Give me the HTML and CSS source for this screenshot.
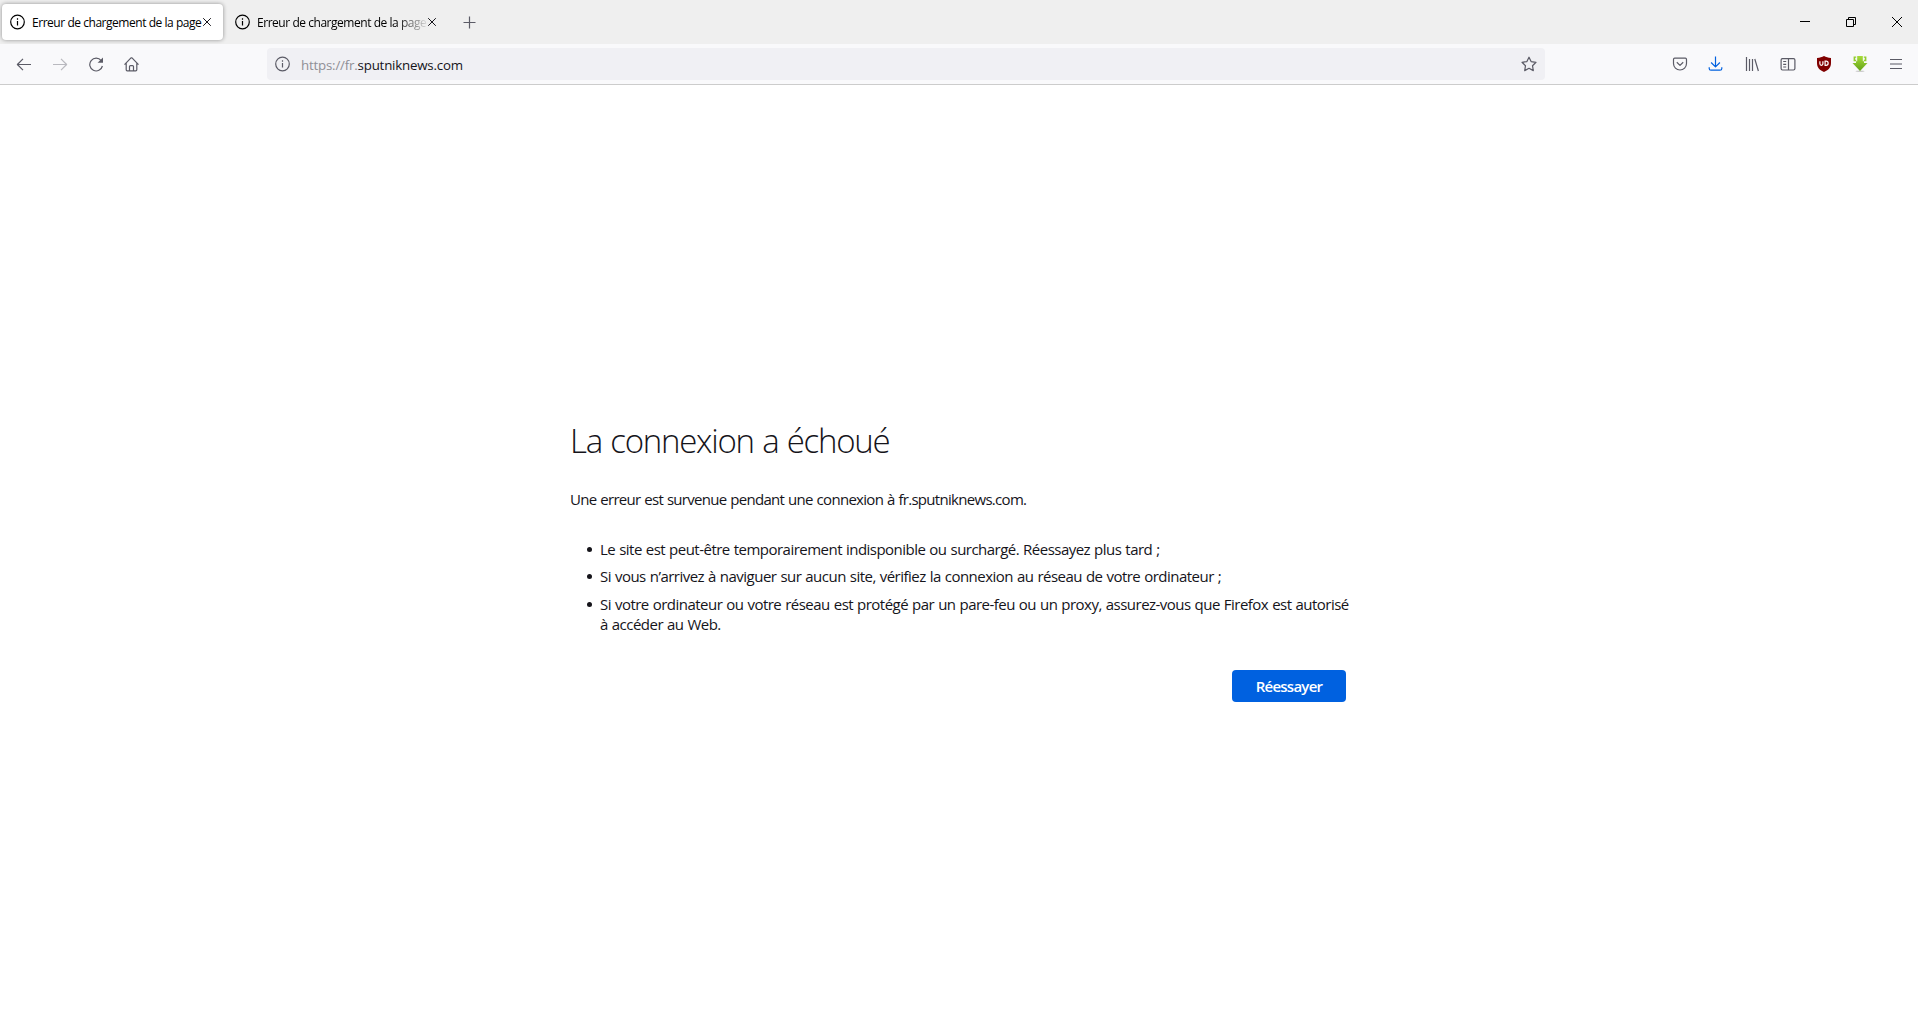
FILE: index.html
```html
<!DOCTYPE html>
<html lang="fr">
<head>
    <meta charset="UTF-8">
    <meta name="viewport" content="width=device-width, initial-scale=1.0">
    <title>Erreur de chargement de la page</title>
    <link rel="stylesheet" href="styles.css">
</head>
<body>
    <div class="tabbar">
        <div class="tab active">
            <svg class="icon" viewBox="0 0 16 16"><circle cx="7.5" cy="8" r="6.8"/><path d="M7.5 7v4.6M7.5 4.3v1.4"/></svg>
            <span class="tab-label">Erreur de chargement de la page</span>
            <svg class="tab-close" viewBox="0 0 10 10"><path d="M1.2 1.2l7.6 7.6M8.8 1.2L1.2 8.8"/></svg>
        </div>
        <div class="tab">
            <svg class="icon" viewBox="0 0 16 16"><circle cx="7.5" cy="8" r="6.8"/><path d="M7.5 7v4.6M7.5 4.3v1.4"/></svg>
            <span class="tab-label fade">Erreur de chargement de la page</span>
            <svg class="tab-close" viewBox="0 0 10 10"><path d="M1.2 1.2l7.6 7.6M8.8 1.2L1.2 8.8"/></svg>
        </div>
        <div class="new-tab">
            <svg class="icon" viewBox="0 0 16 16"><path d="M8.5 2.5v12M2.5 8.5h12"/></svg>
        </div>
        <div class="window-buttons">
            <div class="win-btn"><svg class="win-icon" viewBox="0 0 10 10"><path d="M0 4.5h10"/></svg></div>
            <div class="win-btn"><svg class="win-icon" viewBox="0 0 10 10"><path d="M.5 2.5h7v7h-7zM2.5 2.5v-2h7v7h-2"/></svg></div>
            <div class="win-btn"><svg class="win-icon" viewBox="0 0 10 10"><path d="M0 0l10 10M10 0L0 10"/></svg></div>
        </div>
    </div>

    <div class="toolbar">
        <div class="nav-btn"><svg class="icon" viewBox="0 0 16 16"><path d="M15 8.5H1.6M7 2.8L1.4 8.5 7 14.2"/></svg></div>
        <div class="nav-btn disabled"><svg class="icon" viewBox="0 0 16 16"><path d="M1 8.5h13.4M9 2.8l5.6 5.7L9 14.2"/></svg></div>
        <div class="nav-btn"><svg class="icon" viewBox="0 0 16 16"><path d="M13.2 4.6A6.4 6.4 0 1 0 14.4 10"/><path class="solid" d="M15 1.6v5.2H9.6z"/></svg></div>
        <div class="nav-btn"><svg class="icon" viewBox="0 0 16 16"><path d="M.5 8.6L7 1.8h1l6.5 6.8M2.2 7v6.8q0 1 1 1h8.6q1 0 1-1V7M5.5 14.6v-4q0-1 1-1h2q1 0 1 1v4"/></svg></div>

        <div class="urlbar">
            <svg class="icon" viewBox="0 0 16 16"><circle cx="7.5" cy="8" r="6.8"/><path d="M7.5 7v4.6M7.5 4.3v1.4"/></svg>
            <span class="url">https://fr.<span class="domain">sputniknews.com</span></span>
            <svg class="icon" viewBox="0 0 16 16"><path d="M8 1.2l2.1 4.4 4.9.7-3.5 3.4.8 4.9L8 12.3l-4.3 2.3.8-4.9L1 6.3l4.9-.7z"/></svg>
        </div>

        <div class="nav-btn"><svg class="icon" viewBox="0 0 16 16"><path d="M2.7 2.2h10.6q1.2 0 1.2 1.2v4.1a6.5 6.5 0 0 1-13 0V3.4q0-1.2 1.2-1.2zM4.8 6.3L8 9.4l3.2-3.1"/></svg></div>
        <div class="nav-btn download"><svg class="icon" viewBox="0 0 16 16"><path d="M7.5 .6v10.2M3.1 6.5l4.4 4.4 4.4-4.4M1.2 11.2v1.2q0 1.8 1.8 1.8h9q1.8 0 1.8-1.8v-1.2"/></svg></div>
        <div class="nav-btn"><svg class="icon" viewBox="0 0 16 16"><path d="M2.5 1v14M5.5 3v12M8.5 3v12M10.8 3l3.6 12"/></svg></div>
        <div class="nav-btn"><svg class="icon" viewBox="0 0 16 16"><path d="M2 2.6h11.5q1.4 0 1.4 1.4v8.6q0 1.4-1.4 1.4H2.5q-1.4 0-1.4-1.4V4q0-1.4 1.4-1.4zM8.5 2.6V14M3.2 5.5h3M3.2 8.3h3M3.2 11h3"/></svg></div>
        <div class="nav-btn">
            <svg class="badge" viewBox="0 0 16 16">
                <path fill="#800000" d="M8 0c2 1.2 4 1.8 7 2v5c0 5-3 7.3-7 9-4-1.7-7-4-7-9V2c3-.2 5-.8 7-2z"/>
                <path fill="none" stroke="#fff" stroke-width="1.2" d="M3.9 5.2v2.6q0 1.5 1.5 1.5t1.5-1.5V5.2M9.1 5.2v4.1h1a2 2 0 0 0 0-4.1z"/>
            </svg>
        </div>
        <div class="nav-btn">
            <svg class="badge" viewBox="0 0 16 16">
                <defs><linearGradient id="green" x2="0" y2="1"><stop offset="0" stop-color="#a8dc3a"/><stop offset="1" stop-color="#62a316"/></linearGradient></defs>
                <ellipse cx="8" cy="15.2" rx="4.5" ry=".8" fill="#ccc"/>
                <path fill="url(#green)" d="M5.2 0h5.6v5.2H12V7h3.5L8 15 .5 7H4V5.2h1.2z"/>
                <path fill="#93cc30" d="M1.6.5h2.6v1.2h-1v2h1v1.5H1.6zM14.4.5h-2.6v1.2h1v2h-1v1.5h2.6z"/>
            </svg>
        </div>
        <div class="nav-btn"><svg class="icon" viewBox="0 0 16 16"><path d="M2 3.5h12M2 8h12M2 12.5h12"/></svg></div>
    </div>

    <div class="content">
        <div class="error-box">
            <h1>La connexion a échoué</h1>
            <p>Une erreur est survenue pendant une connexion à fr.sputniknews.com.</p>
            <ul>
                <li>Le site est peut-être temporairement indisponible ou surchargé. Réessayez plus tard ;</li>
                <li>Si vous n’arrivez à naviguer sur aucun site, vérifiez la connexion au réseau de votre ordinateur ;</li>
                <li>Si votre ordinateur ou votre réseau est protégé par un pare-feu ou un proxy, assurez-vous que Firefox est autorisé<br>à accéder au Web.</li>
            </ul>
            <div class="actions">
                <button class="retry">Réessayer</button>
            </div>
        </div>
    </div>
</body>
</html>
```
FILE: styles.css
```css
* {
    box-sizing: border-box;
}
body {
    margin: 0;
    height: 100vh;
    display: flex;
    flex-direction: column;
    overflow: hidden;
    background-color: #fff;
    color: #15141a;
    font-family: "Open Sans", "Noto Sans", sans-serif;
    font-size: 15px;
}
svg {
    display: block;
    flex: none;
    fill: none;
    stroke: currentColor;
}
.icon {
    width: 16px;
    height: 16px;
    stroke-width: 1.2;
    stroke-linejoin: round;
}
.solid {
    fill: currentColor;
    stroke: none;
}
.badge {
    width: 16px;
    height: 16px;
    stroke: none;
}

/* tabs */
.tabbar {
    display: flex;
    height: 44px;
    padding-left: 2px;
    background-color: #efefef;
}
.tab {
    display: flex;
    align-items: center;
    width: 221px;
    height: 36px;
    margin: 4px 4px 0 0;
    padding-left: 8px;
    border-radius: 4px;
    color: #000;
}
.tab.active {
    background-color: #fff;
    box-shadow: 0 0 4px rgba(0, 0, 0, 0.4);
}
.tab-label {
    width: 170px;
    margin-left: 6px;
    white-space: nowrap;
    font-size: 12px;
    letter-spacing: -0.46px;
}
.tab-label.fade {
    -webkit-mask-image: linear-gradient(to right, #000 140px, transparent 172px);
    mask-image: linear-gradient(to right, #000 140px, transparent 172px);
}
.tab-close {
    width: 10px;
    height: 10px;
    color: #15141a;
}
.new-tab {
    display: flex;
    align-items: center;
    margin-left: 9px;
    color: #5b5b66;
}
.window-buttons {
    display: flex;
    margin: 0 -2px 0 auto;
}
.win-btn {
    display: flex;
    align-items: center;
    justify-content: center;
    width: 46px;
    color: #000;
}
.win-icon {
    width: 10px;
    height: 10px;
    overflow: visible;
}

/* navigation */
.toolbar {
    display: flex;
    align-items: center;
    height: 41px;
    padding: 0 4px 0 6px;
    background-color: #f9f9fb;
    border-bottom: 1px solid #ccc;
}
.nav-btn {
    display: flex;
    justify-content: center;
    width: 36px;
    color: #5b5b66;
}
.nav-btn.disabled {
    opacity: 0.4;
}
.nav-btn.download {
    color: #0061e0;
}
.urlbar {
    display: flex;
    flex: 1;
    align-items: center;
    height: 32px;
    margin: 0 117px;
    padding: 0 8px;
    border-radius: 4px;
    background-color: #f0f0f4;
    color: #5b5b66;
}
.url {
    flex: 1;
    margin-left: 10px;
    padding-top: 2px;
    font-size: 13.3px;
    letter-spacing: -0.2px;
    color: #8f8f96;
}
.domain {
    color: #15141a;
}

/* error page */
.content {
    flex: 1;
    display: flex;
    justify-content: center;
    padding: 334px 2px 0 0;
}
.error-box {
    width: 776px;
}
h1 {
    margin: 0 0 26px;
    font-size: 33px;
    font-weight: 300;
    line-height: 44px;
    letter-spacing: -1.25px;
    word-spacing: 1px;
}
p {
    margin: 0 0 30px;
    line-height: 20px;
    letter-spacing: -0.7px;
    word-spacing: 0.6px;
}
ul {
    margin: 0;
    padding-left: 30px;
    list-style: none;
}
li {
    position: relative;
    margin-bottom: 7.4px;
    line-height: 20px;
    letter-spacing: -0.52px;
    word-spacing: 0.6px;
    white-space: nowrap;
}
li::before {
    content: "";
    position: absolute;
    left: -13px;
    top: 8px;
    width: 5px;
    height: 5px;
    border-radius: 50%;
    background-color: #15141a;
}
.actions {
    display: flex;
    justify-content: flex-end;
    margin-top: 35.8px;
}
.retry {
    width: 114px;
    height: 32px;
    padding: 0;
    border: none;
    border-radius: 4px;
    background-color: #0061e0;
    color: #fff;
    font-family: inherit;
    font-size: 15px;
    font-weight: 600;
    letter-spacing: -0.75px;
}
```
